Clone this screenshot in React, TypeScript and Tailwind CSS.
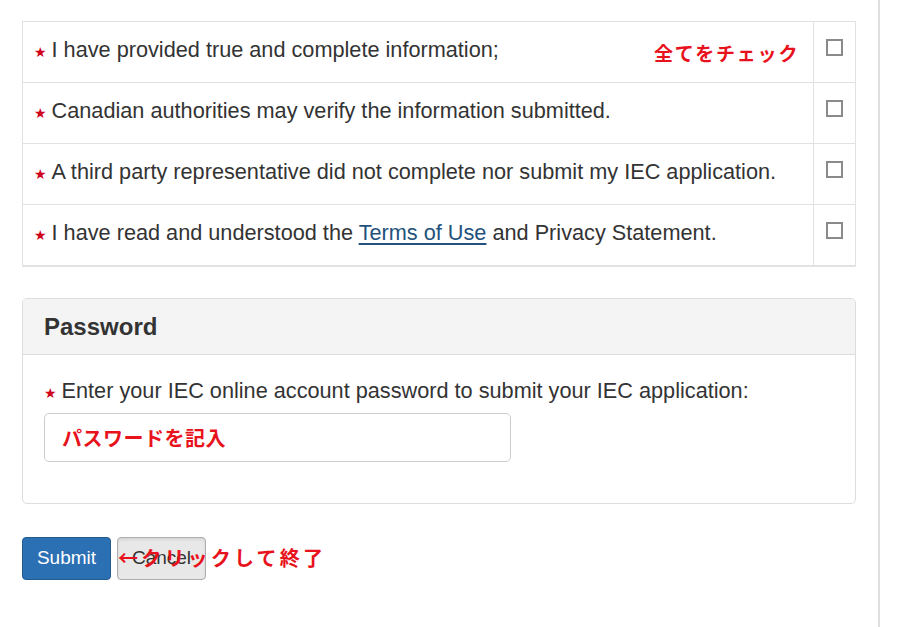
import React from "react";

const rows: React.ReactNode[] = [
  "I have provided true and complete information;",
  "Canadian authorities may verify the information submitted.",
  "A third party representative did not complete nor submit my IEC application.",
  <>
    I have read and understood the{" "}
    <a href="#" className="text-[#23527c] underline underline-offset-[3px]">
      Terms of Use
    </a>{" "}
    and Privacy Statement.
  </>,
];

function Star() {
  return <span className="mr-[5px] text-[14px] text-[#d0021b] font-['DejaVu_Sans',sans-serif]">★</span>;
}

function Note({ children, className }: { children: React.ReactNode; className: string }) {
  return (
    <span
      className={
        "absolute whitespace-nowrap font-bold text-[#e8121c] font-['Noto_Sans_CJK_JP',sans-serif] leading-none " +
        className
      }
    >
      {children}
    </span>
  );
}

export default function App() {
  return (
    <div className="min-h-[627px] w-[880px] border-r-2 border-[#dedede] bg-white pl-[22px] pr-[22px] pt-[21px] font-['Liberation_Sans',Arial,sans-serif] text-[#333]">
      {/* Declarations */}
      <div className="relative w-[834px] border border-[#e2e2e2]">
        {rows.map((text, i) => (
          <div key={i} className="flex h-[61px] border-b border-[#e2e2e2] last:h-[60px] last:border-b-0">
            <div className="flex flex-1 items-baseline pl-[11px] pt-[14px] text-[21.7px] leading-[28px]">
              <Star />
              <span>{text}</span>
            </div>
            <div className="flex w-[42px] justify-center border-l border-[#e2e2e2] pt-[17px]">
              <span className="h-[17px] w-[17px] border-2 border-[#8a8a8a] bg-white" />
            </div>
          </div>
        ))}
        <Note className="left-[631px] top-[21px] text-[19px] tracking-[1.8px]">全てをチェック</Note>
      </div>

      {/* Password */}
      <div className="mt-[31px] w-[834px] overflow-hidden rounded-[5px] border border-[#dddddd]">
        <div className="flex h-[56px] items-center border-b border-[#dddddd] bg-[#f4f4f4] px-[21px]">
          <h3 className="text-[24px] font-bold text-[#333]">Password</h3>
        </div>
        <div className="px-[21px] pt-[22px] pb-[41px]">
          <div className="flex items-baseline text-[21.7px] leading-[28px]">
            <Star />
            <span>Enter your IEC online account password to submit your IEC application:</span>
          </div>
          <div className="mt-[6px] flex h-[49px] w-[467px] items-center rounded-[5px] border border-[#cccccc] px-[17px]">
            <span className="text-[20px] font-bold text-[#e8121c] font-['Noto_Sans_CJK_JP',sans-serif] tracking-[0.5px]">
              パスワードを記入
            </span>
          </div>
        </div>
      </div>

      {/* Actions */}
      <div className="relative mt-[33px] flex gap-[6px]">
        <button className="h-[43px] w-[89px] rounded-[4px] border border-[#245b8f] bg-[#2b70b3] text-[19px] text-white">
          Submit
        </button>
        <button className="h-[43px] w-[89px] rounded-[4px] border border-[#adadad] bg-[#e8e8e8] text-[19px] text-[#333] shadow-[inset_0_2px_3px_rgba(0,0,0,0.08)]">
          Cancel
        </button>
        <Note className="left-[96px] top-[11px] text-[20px] tracking-[3.2px]">←クリックして終了</Note>
      </div>
    </div>
  );
}
